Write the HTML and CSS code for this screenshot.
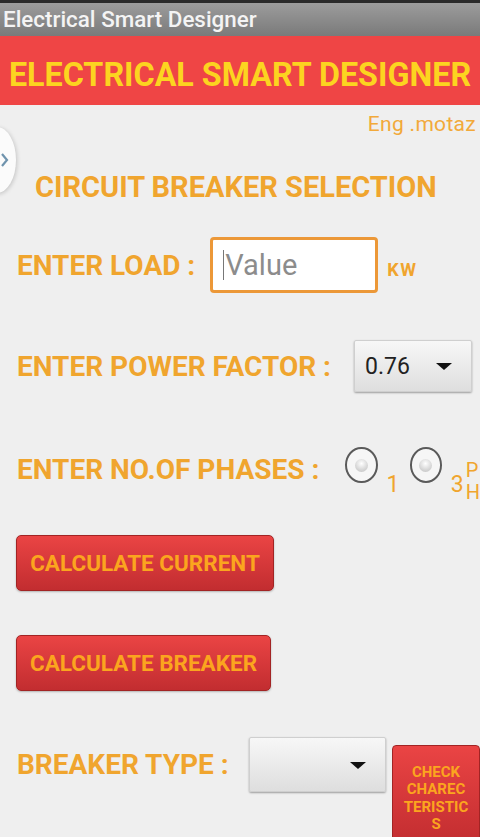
FILE: index.html
```html
<!DOCTYPE html>
<html>
<head>
<meta charset="utf-8">
<link rel="stylesheet" href="styles.css">
</head>
<body>
<div class="statusbar"></div>
<div class="titlebar">Electrical Smart Designer</div>
<div class="banner">ELECTRICAL SMART DESIGNER</div>
<div class="content">
  <div class="drawer-tab">
    <svg width="10" height="16" viewBox="0 0 10 16"><path d="M2 2 L7 8 L2 14" fill="none" stroke="#6f93ad" stroke-width="2.2"/></svg>
  </div>
  <div class="author">Eng .motaz</div>
  <div class="heading">CIRCUIT BREAKER SELECTION</div>

  <div class="row row-load">
    <span class="label">ENTER LOAD :</span>
    <div class="input"><span class="caret"></span><span class="placeholder">Value</span></div>
    <span class="unit">KW</span>
  </div>

  <div class="row row-pf">
    <span class="label">ENTER POWER FACTOR :</span>
    <div class="spinner spinner-pf"><span class="spin-text">0.76</span><span class="tri"></span></div>
  </div>

  <div class="row row-phase">
    <span class="label">ENTER NO.OF PHASES :</span>
    <div class="radio radio-first"><span class="dot"></span></div>
    <span class="radio-text">1</span>
    <div class="radio radio-second"><span class="dot"></span></div>
    <span class="radio-text">3</span>
    <span class="radio-stack">P<br>H</span>
  </div>

  <button class="btn btn-current">CALCULATE CURRENT</button>
  <button class="btn btn-breaker">CALCULATE BREAKER</button>

  <div class="row row-type">
    <span class="label label-type">BREAKER TYPE :</span>
    <div class="spinner spinner-type"><span class="tri"></span></div>
    <button class="check">CHECK<br>CHAREC<br>TERISTIC<br>S</button>
  </div>
</div>
</body>
</html>
```
FILE: styles.css
```css
html, body {
  margin: 0;
  padding: 0;
}
body {
  width: 480px;
  height: 837px;
  overflow: hidden;
  background: #efefef;
  font-family: Roboto, "Liberation Sans", sans-serif;
}
.statusbar {
  height: 3px;
  background: #2a2a2a;
}
.titlebar {
  height: 33px;
  background: linear-gradient(#9c9c9c, #7a7a7a);
  color: #f4f4f4;
  font-size: 22.4px;
  font-weight: 500;
  line-height: 33px;
  padding-left: 3px;
  box-sizing: border-box;
}
.banner {
  height: 69px;
  box-sizing: border-box;
  padding-top: 10px;
  background: #ef4545;
  color: #fcd420;
  font-size: 32.3px;
  font-weight: bold;
  line-height: 59px;
  text-align: center;
  white-space: nowrap;
}
.content {
  position: relative;
}
.drawer-tab {
  position: absolute;
  left: -22px;
  top: 22px;
  width: 38px;
  height: 66px;
  border-radius: 50%;
  background: #fbfbfb;
  box-shadow: 1px 1px 4px rgba(0,0,0,0.18);
  display: flex;
  align-items: center;
  justify-content: flex-end;
  box-sizing: border-box;
  padding-right: 6px;
}
.author {
  padding-top: 7px;
  line-height: 24px;
  font-size: 21px;
  letter-spacing: 0.3px;
  color: #f2a93a;
  text-align: right;
  padding-right: 4px;
}
.heading {
  margin-top: 34px;
  margin-left: 35px;
  font-size: 29px;
  line-height: 34px;
  font-weight: bold;
  color: #f0a52e;
  white-space: nowrap;
}
.row {
  display: flex;
  align-items: center;
  margin-left: 17px;
  white-space: nowrap;
}
.label {
  font-size: 28px;
  font-weight: bold;
  color: #f0a52e;
}
.row-load {
  margin-top: 33px;
  height: 56px;
}
.input {
  margin-left: 15px;
  width: 168px;
  height: 56px;
  box-sizing: border-box;
  border: 3px solid #ec9838;
  border-radius: 4px;
  background: #fff;
  display: flex;
  align-items: center;
  padding-left: 10px;
}
.caret {
  width: 1px;
  height: 30px;
  background: #777;
  margin-right: 1px;
}
.placeholder {
  font-size: 29px;
  color: #8c8c8c;
}
.unit {
  margin-left: 9px;
  margin-top: 8px;
  font-size: 18px;
  letter-spacing: 1.5px;
  font-weight: bold;
  color: #f0a52e;
}
.row-pf {
  margin-top: 47px;
  height: 52px;
}
.spinner {
  box-sizing: border-box;
  background: linear-gradient(#f7f7f7, #dedede);
  border: 1px solid #cfcfcf;
  border-radius: 2px;
  box-shadow: 0 1px 2px rgba(0,0,0,0.35);
  display: flex;
  align-items: center;
  position: relative;
}
.spinner-pf {
  margin-left: 23px;
  width: 118px;
  height: 52px;
}
.spin-text {
  margin-left: 10px;
  font-size: 23px;
  color: #222;
}
.tri {
  position: absolute;
  right: 19px;
  top: 50%;
  margin-top: -3px;
  width: 0;
  height: 0;
  border-left: 8px solid transparent;
  border-right: 8px solid transparent;
  border-top: 7px solid #111;
}
.row-phase {
  margin-top: 52px;
  height: 50px;
}
.radio {
  margin-top: -8px;
  width: 36px;
  height: 36px;
  box-sizing: border-box;
  border: 2px solid #5a5a5a;
  border-radius: 50%;
  background: #f6f6f6;
  display: flex;
  align-items: center;
  justify-content: center;
}
.radio-first {
  margin-left: 26px;
}
.radio-second {
  margin-left: 10px;
}
.dot {
  width: 13px;
  height: 13px;
  border-radius: 50%;
  background: radial-gradient(circle at 50% 35%, #fff 0, #d9d9d9 55%, #bdbdbd 100%);
}
.radio-text {
  margin-left: 9px;
  margin-top: 30px;
  font-size: 23px;
  color: #f0a52e;
}
.radio-stack {
  margin-left: 2px;
  margin-top: 24px;
  font-size: 20px;
  line-height: 22px;
  color: #f0a52e;
}
.btn {
  display: block;
  margin-left: 16px;
  height: 56px;
  border: 1px solid #a22424;
  border-radius: 5px;
  background: linear-gradient(#ea4444, #c22d30);
  color: #fba51e;
  font-family: Roboto, "Liberation Sans", sans-serif;
  font-size: 22.5px;
  font-weight: bold;
  padding: 0;
  box-shadow: 0 1px 2px rgba(0,0,0,0.25);
}
.btn-current {
  margin-top: 41px;
  width: 258px;
}
.btn-breaker {
  margin-top: 44px;
  width: 255px;
}
.row-type {
  margin-top: 46px;
  align-items: flex-start;
}
.label-type {
  margin-top: 11px;
}
.spinner-type {
  margin-left: 20px;
  width: 138px;
  height: 55px;
}
.check {
  margin-left: 6px;
  margin-top: 8px;
  width: 88px;
  height: 100px;
  border: 1px solid #a22424;
  border-radius: 4px;
  background: linear-gradient(#ea4444, #c22d30);
  color: #fba51e;
  font-family: Roboto, "Liberation Sans", sans-serif;
  font-size: 15px;
  line-height: 17.3px;
  font-weight: bold;
  padding: 7px 0 0 0;
  text-align: center;
  display: block;
  flex-shrink: 0;
}
```
